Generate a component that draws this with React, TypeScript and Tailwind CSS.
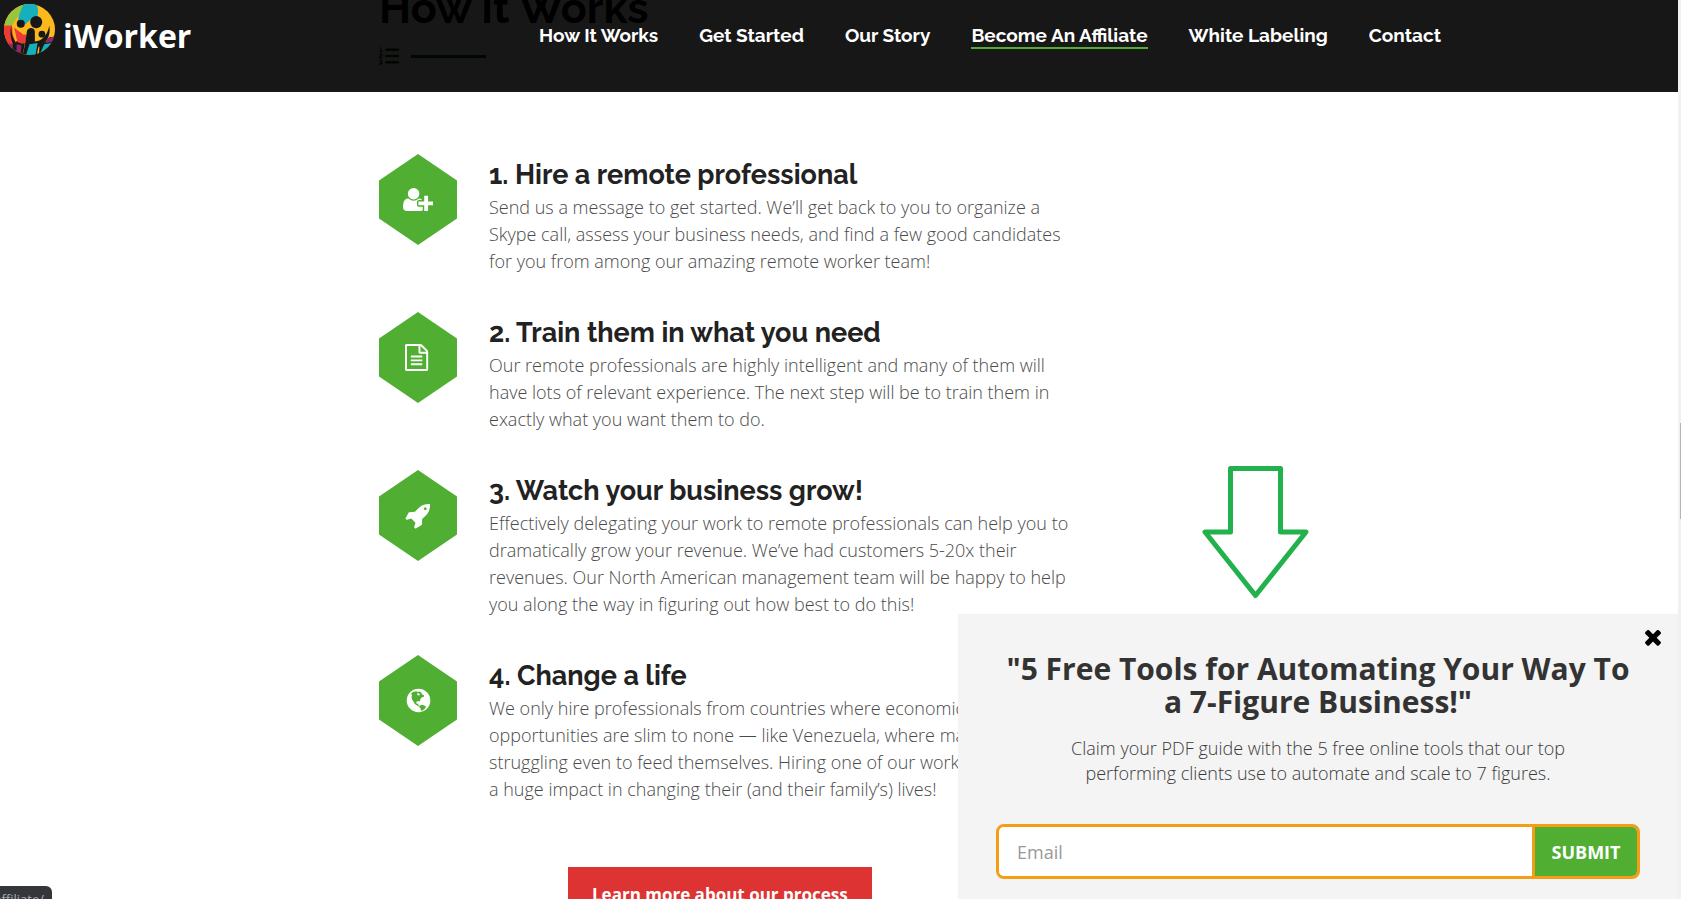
// iWorker landing page: process steps with the sticky header and the email opt-in popup

import React from 'react';
import { FaListOl } from 'react-icons/fa';

const navLinks = [
  { label: 'How It Works', href: '#how-it-works' },
  { label: 'Get Started', href: '#get-started' },
  { label: 'Our Story', href: '#our-story' },
  { label: 'Become An Affiliate', href: '#affiliate', active: true },
  { label: 'White Labeling', href: '#white-labeling' },
  { label: 'Contact', href: '#contact' },
];

const UserPlusIcon = () => (
  <svg viewBox="0 0 2048 1792" className="h-[27px]" fill="currentColor" aria-hidden="true">
    <path d="M704 896q-159 0-271.5-112.5t-112.5-271.5 112.5-271.5 271.5-112.5 271.5 112.5 112.5 271.5-112.5 271.5-271.5 112.5zm960 128h352q13 0 22.5 9.5t9.5 22.5v192q0 13-9.5 22.5t-22.5 9.5h-352v352q0 13-9.5 22.5t-22.5 9.5h-192q-13 0-22.5-9.5t-9.5-22.5v-352h-352q-13 0-22.5-9.5t-9.5-22.5v-192q0-13 9.5-22.5t22.5-9.5h352v-352q0-13 9.5-22.5t22.5-9.5h192q13 0 22.5 9.5t9.5 22.5v352zm-736 224q0 52 38 90t90 38h256v238q-68 50-171 50h-874q-121 0-194-69t-73-190q0-53 3.5-103.5t14-109 26.5-108.5 43-97.5 62-81 85.5-53.5 111.5-20q19 0 39 17 79 61 154.5 91.5t164.5 30.5 164.5-30.5 154.5-91.5q20-17 39-17 132 0 217 96h-223q-52 0-90 38t-38 90v192z" />
  </svg>
);

const FileIcon = () => (
  <svg viewBox="128 0 1792 1792" className="h-[27px]" fill="currentColor" aria-hidden="true">
    <path d="M1596 380q28 28 48 76t20 88v1152q0 40-28 68t-68 28h-1344q-40 0-68-28t-28-68v-1600q0-40 28-68t68-28h896q40 0 88 20t76 48zm-444-244v376h376q-10-29-22-41l-313-313q-12-12-41-22zm384 1528v-1024h-416q-40 0-68-28t-28-68v-416h-768v1536h1280zm-1024-864q0-14 9-23t23-9h704q14 0 23 9t9 23v64q0 14-9 23t-23 9h-704q-14 0-23-9t-9-23v-64zm736 224q14 0 23 9t9 23v64q0 14-9 23t-23 9h-704q-14 0-23-9t-9-23v-64q0-14 9-23t23-9h704zm0 256q14 0 23 9t9 23v64q0 14-9 23t-23 9h-704q-14 0-23-9t-9-23v-64q0-14 9-23t23-9h704z" />
  </svg>
);

const RocketIcon = () => (
  <svg viewBox="0 0 1792 1792" className="h-[27px]" fill="currentColor" aria-hidden="true">
    <path d="M1440 448q0-40-28-68t-68-28-68 28-28 68 28 68 68 28 68-28 28-68zm224-288q0 249-75.5 430.5t-253.5 360.5q-81 80-195 176l-20 379q-2 16-16 26l-384 224q-7 4-16 4-12 0-23-9l-64-64q-13-14-8-32l85-276-281-281-276 85q-3 1-9 1-14 0-23-9l-64-64q-17-19-5-39l224-384q10-14 26-16l379-20q96-114 176-195 188-187 358-258t431-71q14 0 24 9.5t10 22.5z" />
  </svg>
);

const GlobeIcon = () => (
  <svg viewBox="0 0 27 27" className="h-[27px]" aria-hidden="true">
    <circle cx="13.5" cy="13.5" r="11.8" fill="white" />
    <path
      fill="#50af33"
      d="M6 6.8 8 5l3.200-.8 1.600.8 1.600-.6 2 1 .4 1.800 2.200 1.100-.3 1.700-2.200.6-1.300 2-.2 1.900-1.500-.5-2.200.8.2 1.900 1.700.1.200 1.500 1.600.8-.5.6-2-.9-2.700-1.900-1-2-1.800-2.400-.5-2.400.6-1.800zM14.800 18.700l2-.9 1.700.5 2.600 1.200-1 1.900-2.600 2-1.500.4-.3-2.100-1.200-1.500z"
    />
    <path fill="white" d="m12.200 6.200 2.100.3.600 1.500-1.400.5-1.400-.9z" />
  </svg>
);

const CloseIcon = () => (
  <svg viewBox="0 0 1792 1792" className="h-6 w-6" fill="currentColor" aria-hidden="true">
    <path d="M1490 1322q0 40-28 68l-136 136q-28 28-68 28t-68-28l-294-294-294 294q-28 28-68 28t-68-28l-136-136q-28-28-28-68t28-68l294-294-294-294q-28-28-28-68t28-68l136-136q28-28 68-28t68 28l294 294 294-294q28-28 68-28t68 28l136 136q28 28 28 68t-28 68l-294 294 294 294q28 28 28 68z" />
  </svg>
);

const LogoMark = () => (
  <svg viewBox="12 12 152 152" className="h-[51px] w-[51px]" aria-hidden="true">
    <defs>
      <clipPath id="logo-disc">
        <circle cx="88" cy="88" r="76" />
      </clipPath>
    </defs>
    <g clipPath="url(#logo-disc)">
      <rect x="12" y="12" width="152" height="152" fill="#fdb81e" />
      <path d="M12 12h66L58 40 46 60 36 76H12z" fill="#97c53c" />
      <path d="M70 12h38c6 12 8 26 2 40l-20 8-14 12-22-4 2-22z" fill="#14b1bd" />
      <path d="M12 76h24l2 26 10 26-12 10-24-2z" fill="#ee3a34" />
      <path d="M42 82l12 10 14 8 12 6-6 26-22-6z" fill="#ee3a34" />
      <path d="M52 88l18-10 14 8-14 18z" fill="#fdb81e" />
      <path d="M24 130l14 2v26H24z" fill="#92256f" />
      {/* fingers */}
      <path d="M34 76c-1 22 4 40 16 54l-2 34H36l2-34c-7-18-9-36-4-54z" fill="#181818" />
      <path d="M48 122c8 6 16 8 26 8l-6 34H48z" fill="#181818" />
      <path d="M50 132l14 3-2 23-13-4z" fill="#92256f" />
      <path d="M80 94c2-14 24-14 24 0v30c22-2 38-20 43-48 3 22-1 36-11 48l-22 18-4 22H68l8-40z" fill="#181818" />
      <path d="M88 132l24-4-6 36H78z" fill="#14b1bd" />
      <path d="M118 132c14-4 24-12 30-22h16v54h-48z" fill="#181818" />
      <path d="M142 114l20-6-4 16-22 5z" fill="#92256f" />
      <path d="M132 132l22-4-10 16-24 15z" fill="#14b1bd" />
      <circle cx="62" cy="71" r="12" fill="#181818" />
      <circle cx="108" cy="66" r="18" fill="#181818" />
      <circle cx="125" cy="102" r="10" fill="#181818" />
    </g>
  </svg>
);

const steps = [
  {
    title: '1. Hire a remote professional',
    text: 'Send us a message to get started. We’ll get back to you to organize a Skype call, assess your business needs, and find a few good candidates for you from among our amazing remote worker team!',
    icon: <UserPlusIcon />,
  },
  {
    title: '2. Train them in what you need',
    text: 'Our remote professionals are highly intelligent and many of them will have lots of relevant experience. The next step will be to train them in exactly what you want them to do.',
    icon: <FileIcon />,
  },
  {
    title: '3. Watch your business grow!',
    text: 'Effectively delegating your work to remote professionals can help you to dramatically grow your revenue. We’ve had customers 5-20x their revenues. Our North American management team will be happy to help you along the way in figuring out how best to do this!',
    icon: <RocketIcon />,
  },
  {
    title: '4. Change a life',
    text: 'We only hire professionals from countries where economic\nopportunities are slim to none — like Venezuela, where many are\nstruggling even to feed themselves. Hiring one of our workers has\na huge impact in changing their (and their family’s) lives!',
    icon: <GlobeIcon />,
  },
];

const Header: React.FC = () => (
  <header className="absolute inset-x-0 top-0 z-10 flex h-[92px] items-start justify-between bg-black/91 pl-1">
    <a href="#home" className="flex items-start gap-2 pt-1 font-['Open_Sans',sans-serif] text-[32px] leading-[51px] font-bold text-white">
      <LogoMark />
      <span className="pt-1.5">iWorker</span>
    </a>
    <nav className="mr-[237px] flex gap-[41px] pt-6 font-['Raleway','Lato',sans-serif] text-[19px] leading-[23px] font-bold text-white">
      {navLinks.map((link) => (
        <a
          key={link.label}
          href={link.href}
          className={link.active ? 'border-b-2 border-[#50af33]' : 'border-b-2 border-transparent'}
        >
          {link.label}
        </a>
      ))}
    </nav>
  </header>
);

const Steps: React.FC = () => (
  <section id="how-it-works" className="mx-auto w-full max-w-[920px]">
    <h2 className="-mt-5 font-['Raleway','Lato',sans-serif] text-[43px] leading-[56px] font-bold text-black">How It Works</h2>
    <div className="mt-2 flex items-center gap-3 text-[#0a4d0a]">
      <FaListOl className="h-6 w-5" />
      <span className="h-[3px] w-[75px] bg-current"></span>
    </div>
    <div className="mt-[86px] flex flex-col gap-[37px]">
      {steps.map((step) => (
        <div key={step.title} className="flex items-start gap-8">
          <div className="flex h-[91px] w-[78px] shrink-0 items-center justify-center bg-[#50af33] text-white [clip-path:polygon(50%_0,100%_29%,100%_71%,50%_100%,0_71%,0_29%)]">
            {step.icon}
          </div>
          <div className="max-w-[592px]">
            <h3 className="pt-1 pb-0.5 font-['Raleway','Lato',sans-serif] text-[27px] leading-[34px] font-bold text-[#222]">{step.title}</h3>
            <p className="font-['Open_Sans',sans-serif] text-lg leading-[27px] font-light whitespace-pre-line text-[#4a4a4a]">{step.text}</p>
          </div>
        </div>
      ))}
    </div>
    <a
      href="#process"
      className="mt-16 ml-[189px] inline-block bg-[#dd3333] px-6 py-4 font-['Open_Sans',sans-serif] text-[17px] leading-6 font-bold text-white"
    >
      Learn more about our process
    </a>
  </section>
);

const OptInPopup: React.FC = () => (
  <div className="absolute right-0 bottom-0 z-20 w-full max-w-[720px]">
    {/* hand-drawn pointer above the popup */}
    <svg viewBox="0 0 108 136" className="mb-[14px] ml-[243px] h-[136px] w-[108px]" fill="none" aria-hidden="true">
      <path d="M29.500 4.500h50V68H105L54.500 131.500 4 68h25.500z" stroke="#22b14c" strokeWidth="5" strokeLinejoin="round" />
    </svg>
    <aside className="relative bg-[#f4f4f4] px-[38px] pt-[38px] pb-5 text-center font-['Open_Sans',sans-serif]">
      <button type="button" aria-label="Close" className="absolute top-[11px] right-[13px] text-black">
        <CloseIcon />
      </button>
      <h2 className="text-[30px] leading-[33px] font-bold text-[#333]">
        "5 Free Tools for Automating Your Way To a 7-Figure Business!"
      </h2>
      <p className="mx-auto mt-[18px] max-w-[540px] text-lg leading-[25px] font-light text-[#3a3a3a]">
        Claim your PDF guide with the 5 free online tools that our top performing clients use to automate and scale to 7 figures.
      </p>
      <form className="mt-[38px] flex h-[55px] overflow-hidden rounded-lg border-3 border-[#f59d15]">
        <label htmlFor="email" className="sr-only">Email</label>
        <input id="email" type="email" placeholder="Email" className="min-w-0 flex-1 bg-white px-[18px] text-lg placeholder:text-[#999]" />
        <button type="button" className="w-[105px] border-l-3 border-[#f59d15] bg-[#50af33] text-lg font-bold text-white">
          SUBMIT
        </button>
      </form>
    </aside>
  </div>
);

const App: React.FC = () => {
  return (
    <div className="flex h-screen overflow-hidden bg-white">
      <main className="relative flex-1 overflow-hidden">
        <Header />
        <Steps />
        <OptInPopup />
        <div className="absolute bottom-0 left-0 flex h-[13px] w-[52px] justify-end overflow-hidden rounded-tr-md bg-[#35363a] pt-1 pr-2 font-['Open_Sans',sans-serif] text-[13px] leading-[18px] text-[#a5adb8]">
          affiliate/
        </div>
      </main>
      <div className="flex w-[3px] justify-end bg-[#f1f1f1] pt-[423px]">
        <div className="h-24 w-px bg-[#b5b5b5]"></div>
      </div>
    </div>
  );
};

export default App;
